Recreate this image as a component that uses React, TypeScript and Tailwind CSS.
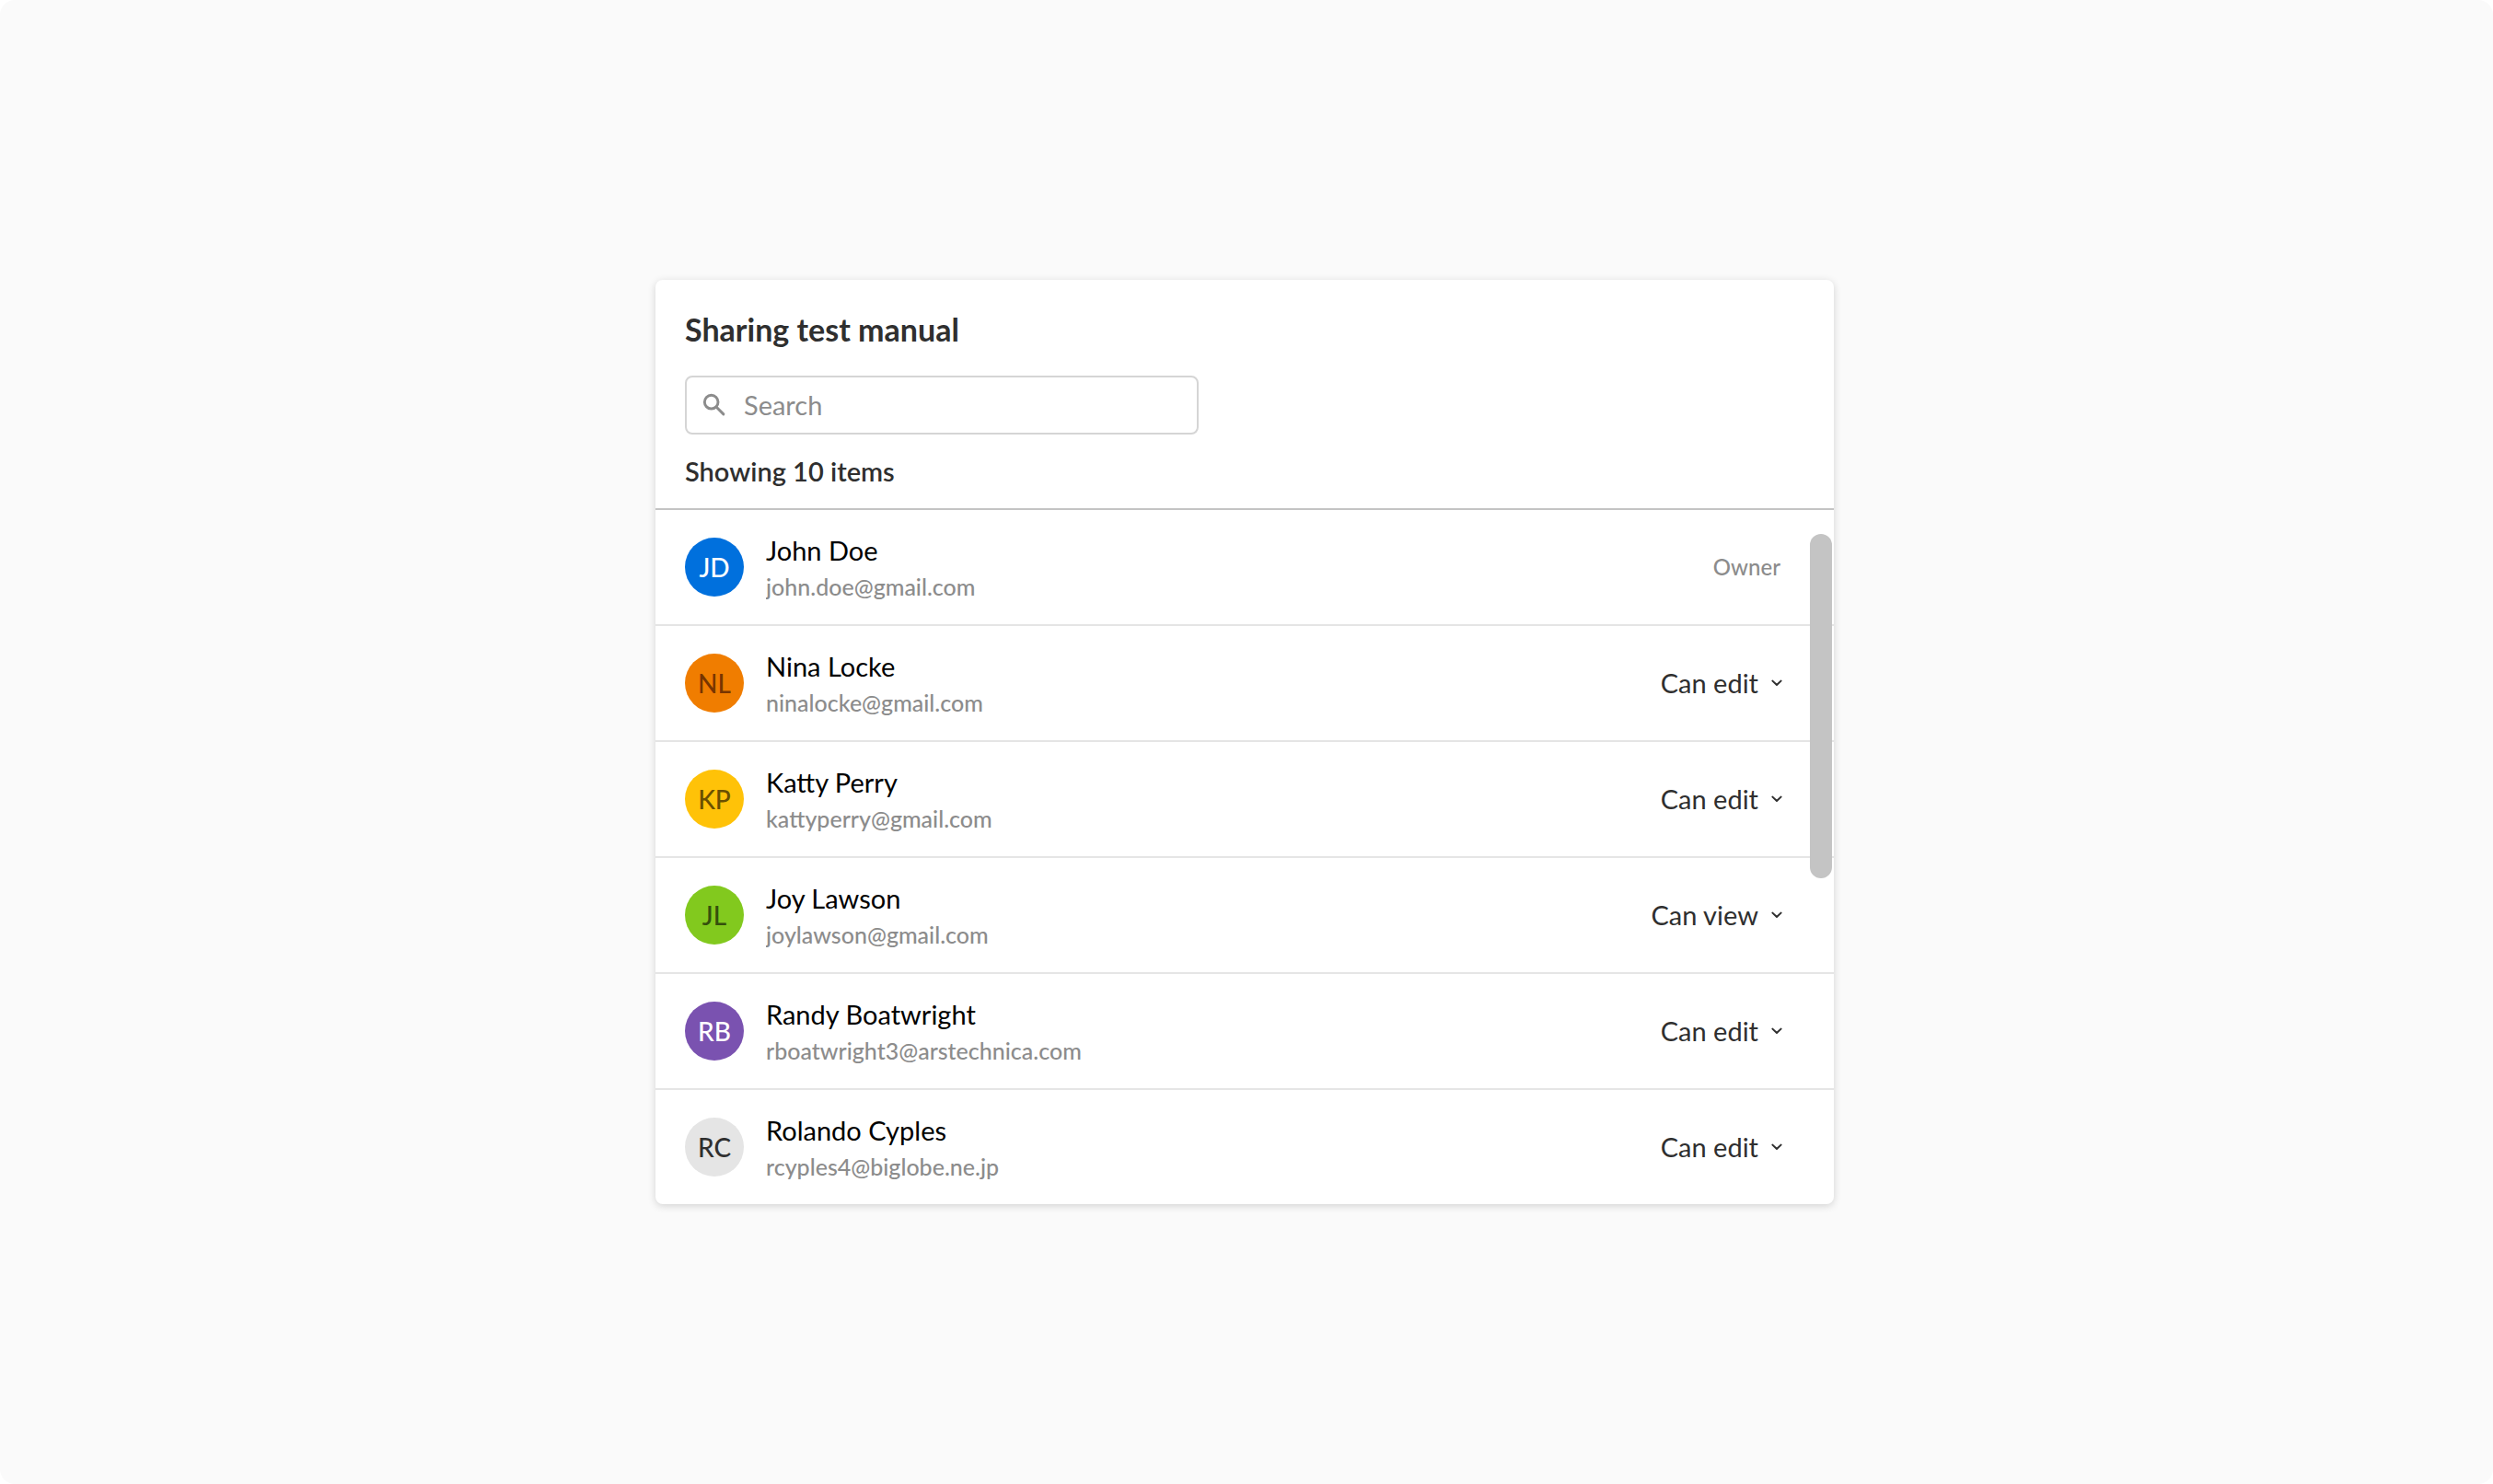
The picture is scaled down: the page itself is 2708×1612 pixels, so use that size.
import { useState } from "react";

type Member = {
  name: string;
  email: string;
  initials: string;
  avatar: string;
  access: "owner" | "edit" | "view";
};

const members: Member[] = [
  { name: "John Doe", email: "john.doe@gmail.com", initials: "JD", avatar: "bg-[#0070dd] text-white", access: "owner" },
  { name: "Nina Locke", email: "ninalocke@gmail.com", initials: "NL", avatar: "bg-[#f07d00] text-[#783500]", access: "edit" },
  { name: "Katty Perry", email: "kattyperry@gmail.com", initials: "KP", avatar: "bg-[#ffc208] text-[#6b5000]", access: "edit" },
  { name: "Joy Lawson", email: "joylawson@gmail.com", initials: "JL", avatar: "bg-[#82c91e] text-[#34500c]", access: "view" },
  { name: "Randy Boatwright", email: "rboatwright3@arstechnica.com", initials: "RB", avatar: "bg-[#7a52b0] text-white", access: "edit" },
  { name: "Rolando Cyples", email: "rcyples4@biglobe.ne.jp", initials: "RC", avatar: "bg-[#e5e5e5] text-[#2f2f2f]", access: "edit" },
];

function SearchIcon() {
  return (
    <svg viewBox="0 0 24 24" className="size-8 shrink-0" fill="none" stroke="currentColor" strokeWidth="2.2" aria-hidden="true">
      <circle cx="9.5" cy="9.5" r="5.5" />
      <path d="M13.7 13.7 19.4 19.4" strokeLinecap="round" />
    </svg>
  );
}

function AccessSelect({ member }: { member: Member }) {
  const [access, setAccess] = useState<string>(member.access);
  return (
    <div className="relative flex items-center">
      <select
        aria-label={`Access for ${member.name}`}
        value={access}
        onChange={(e) => setAccess(e.target.value)}
        className="h-10 cursor-pointer appearance-none bg-transparent pr-[26px] text-right text-[29px] leading-10 text-[#2f2f2f] [text-align-last:right]"
      >
        <option value="edit">Can edit</option>
        <option value="view">Can view</option>
      </select>
      <svg
        viewBox="0 0 12 8"
        className="pointer-events-none absolute right-0 h-2 w-3 text-[#2f2f2f]"
        fill="none"
        stroke="currentColor"
        strokeWidth="2"
        strokeLinecap="round"
        strokeLinejoin="round"
        aria-hidden="true"
      >
        <path d="M1.4 1.6 6 6 10.6 1.6" />
      </svg>
    </div>
  );
}

function MemberRow({ member }: { member: Member }) {
  return (
    <li className="flex items-center gap-6 border-b-2 border-[#e5e5e5] py-[22px] pr-14 pl-8 last:border-b-0">
      <span className={`flex size-16 shrink-0 items-center justify-center rounded-full text-[28px] leading-10 font-medium ${member.avatar}`}>
        {member.initials}
      </span>
      <div className="min-w-0 flex-1 pt-0.5">
        <p className="truncate text-[29px] leading-10 text-black">{member.name}</p>
        <p className="truncate text-[25px] leading-[38px] font-medium text-[#8c8c8c]">{member.email}</p>
      </div>
      {member.access === "owner" ? (
        <span className="pr-0.5 text-2xl leading-10 font-medium text-[#8c8c8c]">Owner</span>
      ) : (
        <AccessSelect member={member} />
      )}
    </li>
  );
}

export default function App() {
  return (
    <div className="bg-white font-[Lato,'Open_Sans',sans-serif]">
      <main className="flex min-h-screen items-center justify-center rounded-2xl bg-[#fafafa] pr-1">
        <section className="w-full max-w-[1280px] overflow-hidden rounded-lg bg-white shadow-[0_2px_8px_rgba(0,0,0,0.16)]">
          <header className="border-b-2 border-[#c4c4c4] px-8 pt-8 pb-5">
            <h1 className="text-[34px] leading-[44px] font-bold text-[#2f2f2f]">Sharing test manual</h1>
            <label className="mt-7 flex h-16 w-full max-w-[558px] items-center gap-4 rounded-lg border-2 border-[#d5d5d5] px-3.5 text-[#8c8c8c]">
              <SearchIcon />
              <input
                type="text"
                aria-label="Search"
                placeholder="Search"
                className="min-w-0 flex-1 bg-transparent text-[29px] leading-10 text-[#2f2f2f] outline-none placeholder:text-[#8c8c8c]"
              />
            </label>
            <p className="mt-5 text-[29px] leading-10 font-semibold text-[#2f2f2f]">Showing 10 items</p>
          </header>
          <div className="relative">
            <ul>
              {members.map((member) => (
                <MemberRow key={member.email} member={member} />
              ))}
            </ul>
            <div className="absolute top-[26px] right-0.5 h-[374px] w-6 rounded-full bg-[#c4c4c4]" />
          </div>
        </section>
      </main>
    </div>
  );
}
